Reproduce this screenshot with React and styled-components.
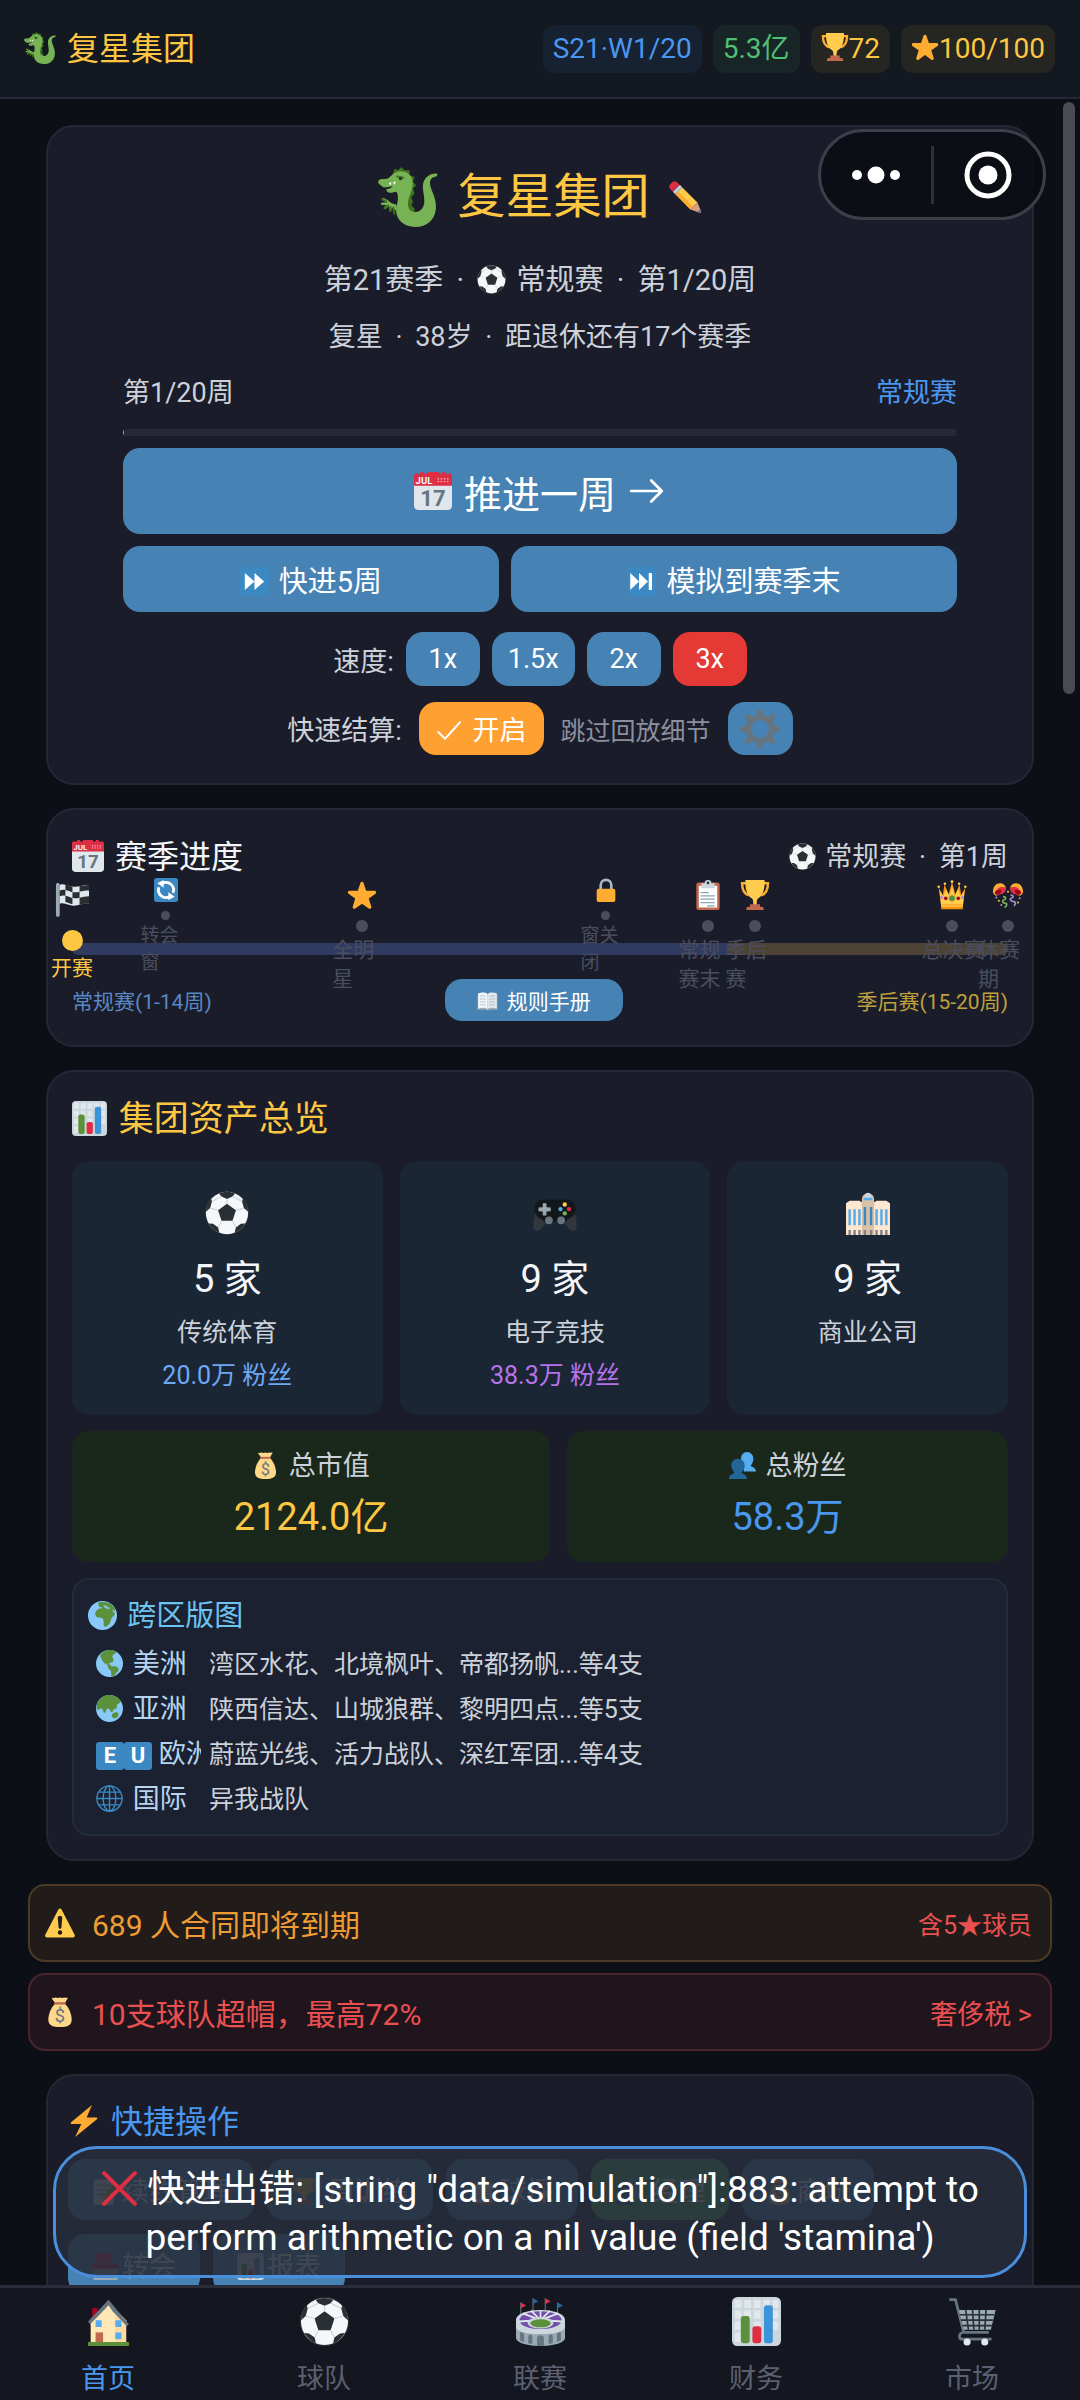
import React from "react";
import styled, { createGlobalStyle, css } from "styled-components";

const color = {
  page: "#0c0f16",
  bar: "#141821",
  card: "#1a1d29",
  line: "#232736",
  steel: "#4682b4",
  blue: "#4a97f0",
  gold: "#fdc743",
  text: "#f4f6fa",
  soft: "#ccd1da",
  muted: "#8b8f9e",
  faint: "#4a4d5e",
};

const GlobalStyle = createGlobalStyle`
  *, *::before, *::after { box-sizing: border-box; }
  body {
    margin: 0;
    background: ${color.page};
    color: ${color.text};
    font-family: Roboto, "Noto Sans CJK SC", sans-serif;
    font-weight: 400;
  }
  h1, h2, p, ul, ol { margin: 0; padding: 0; font-weight: 400; }
  ul, ol { list-style: none; }
  button { font: inherit; border: 0; margin: 0; cursor: pointer; }
  a { color: inherit; text-decoration: none; }
`;

/* ---------- icon drawings, all on a 36 unit grid ---------- */

const glyphs = {
  dragon: (
    <>
      <path fill="#3e721d" d="M9 4 10 1l2 1 2-2 2 2 3 0 0 3 3 1-1 3 2 2-2 2 1 3-2 2 1 3-1 2 2 2v2l3 0 3-2 1-3 0-4-1-3 0-4 1-4 3-3-2 10v10l-8 8-8-4-2-8 1-12z" />
      <path fill="#77b255" d="M35.6 4c-4-.6-8 2-8.600 6.500-.4 3 .8 6.500.8 10 0 4.500-3 6.500-5.800 6.500-2.500 0-4.200-1.800-4-5.500.3-4 3-7 2.800-12C20.600 5 17.500 2.600 13.500 2.600 10 2.600 8.500 5 6.500 6.500 5 7.700 3.500 7 1.500 7.400c-1.500.5-1.800 2-.7 3l2.400 1.800c2 .2 3.500-.4 5.500-.6-.5 1-2 1.500-3.700 1.800 0 1 .6 1.800 1.800 2 1.700.2 3-.6 4.200-.6 1.500 2 1 5.500.3 8-.8 3-.6 6.500 2 9.500 2.200 2.500 5.500 3.700 9.200 3.700 6.500 0 11.500-4 12.200-10.500C35.400 18.500 31.500 14 31.200 10c-.2-3 1.800-4.200 4.200-4.500z" />
      <path fill="#77b255" d="M11 22.500c-2 0-3.500-1-5-2.500L3 18.500c-.8.200-.6 1.200.2 1.500L5 21.200l-3 .3c-.7.5-.3 1.300.6 1.300h2.200L3.400 24.500c0 .8.900.9 1.500.4l1.600-1.300.3 2.600c.5.7 1.300.3 1.300-.5l.2-1.200 3.200 2z" />
      <path fill="none" stroke="#3e721d" strokeWidth="1.200" strokeLinecap="round" d="M2.500 19.300 5 20.800M4 24.800l2-1.700M7.300 26.500l.2-2.500M9.800 28l-.6-3.500M11.600 5.700l3.600.8" />
      <circle cx="13.500" cy="7" r="1" fill="#292f33" />
      <path fill="#fff" d="m6.500 9.500.8 1.700.8-1.900zM9 9l.8 1.800.9-2z" />
    </>
  ),
  pencil: (
    <>
      <path fill="#ffcc4d" d="M6.500 14 14 6.500l17 17-7.500 7.500z" />
      <path fill="#ffac33" d="m6.500 14 3-3 17 17-3 3z" />
      <path fill="#d99e82" d="m31 23.500 4 9.500c.3 1.200-.6 2-1.700 1.700L23.500 31z" />
      <path fill="#66757f" d="m34 30.700 1 2.300c.3 1.200-.6 2-1.700 1.700l-2.500-1z" />
      <path fill="#99aab5" d="M4 11.500 11.500 4l3 3L7 14.500z" />
      <path fill="#e1e8ed" d="m5 12.500 7.500-7.500 1 1L6 13.500z" />
      <path fill="#dd2e44" d="M4 11.500 1.500 9C-.5 7 0 5 2.300 2.500S7-.5 9 1.500L11.500 4z" />
    </>
  ),
  ball: (
    <>
      <circle cx="18" cy="18" r="18" fill="#292f33" />
      <circle cx="18" cy="18" r="17.300" fill="#f5f8fa" />
      <g fill="#292f33">
        <path d="m18 10.500 7.300 5.300-2.800 8.600h-9L10.700 15.800z" />
        <path d="M11.500 2.200C13.500 1.200 16 .7 18 .7s4.500.5 6.500 1.500L22.500 4.500 18 6.500l-4.500-2z" />
        <path d="m.8 17 3.400-3 1.500-5.500L5 6.200C2.200 9.300.7 13 .8 17zM35.200 17l-3.400-3-1.500-5.500.7-2.300c2.800 3.100 4.300 6.800 4.200 10.800z" />
        <path d="m3 26.500 3.600.3 4.200 3 .9 4.500C8 32.700 5 30 3 26.500zM33 26.500l-3.600.3-4.200 3-.9 4.500C28 32.700 31 30 33 26.500z" />
      </g>
      <path stroke="#ccd6dd" strokeWidth=".9" fill="none" d="M18 6.500v4M10.700 15.800l-6.500-1.800M25.300 15.800l6.500-1.800M13.500 24.400l-2.700 5.400M22.500 24.400l2.700 5.400M5.700 8.500 13.500 4.500M30.300 8.500l-7.800-4" />
    </>
  ),
  calendar: (
    <>
      <path fill="#e0e7ec" d="M36 32c0 2.200-1.800 4-4 4H4c-2.200 0-4-1.800-4-4V9c0-2.200 1.800-4 4-4h28c2.200 0 4 1.800 4 4z" />
      <path fill="#dd2e44" d="M0 13V4c0-2 1.500-3 3-3 0 1.500 3 1.500 3-1h3c0 2.500 3.500 2.500 3.500 0h11c0 2.500 3.500 2.500 3.500 0h3c0 2.500 3 2.500 3 1 1.500 0 3 1 3 3v9z" />
      <text x="1.500" y="11.500" fontSize="9" fontWeight="700" fontFamily="Roboto, sans-serif" fill="#f5f8fa">JUL</text>
      <text x="18" y="32" fontSize="21" fontWeight="700" textAnchor="middle" fontFamily="Roboto, sans-serif" fill="#66757f">17</text>
      <g fill="#f4abba">
        {[23, 26, 29, 32].map((x) => [6.5, 9].map((y) => <circle key={x + "-" + y} cx={x} cy={y} r=".8" />))}
      </g>
    </>
  ),
  star: (
    <path fill="#ffac33" d="M27.287 34.627c-.404 0-.806-.124-1.152-.371L18 28.422l-8.135 5.834a1.970 1.970 0 0 1-2.312-.008 1.971 1.971 0 0 1-.721-2.194l3.034-9.792-8.062-5.681a1.980 1.980 0 0 1-.708-2.203 1.978 1.978 0 0 1 1.866-1.363L12.947 13l3.179-9.549a1.976 1.976 0 0 1 3.749 0L23 13l10.036.015a1.975 1.975 0 0 1 1.159 3.566l-8.062 5.681 3.034 9.792a1.970 1.970 0 0 1-.720 2.194 1.957 1.957 0 0 1-1.160.379z" />
  ),
  trophy: (
    <>
      <path fill="none" stroke="#ffac33" strokeWidth="3" d="M9 4H2.500c0 8 2 12.500 8 14.500M27 4h6.500c0 8-2 12.500-8 14.500" />
      <path fill="#ffcc4d" d="M6.500 0h23c.5 9-1.500 19-7.500 22-1.500 1-2 3-2 8h-4c0-5-.5-7-2-8C8 19 6 9 6.500 0z" />
      <path fill="#c1694f" d="M12 29h12v3h2.500c1.500 0 2 1.500 2 4h-21c0-2.500.5-4 2-4H12z" />
    </>
  ),
  forward: (
    <>
      <rect width="36" height="36" rx="4" fill="#3b88c3" />
      <path fill="#fff" d="M6 7.500 18 18 6 28.500zM18 7.500 30 18 18 28.500z" />
    </>
  ),
  skip: (
    <>
      <rect width="36" height="36" rx="4" fill="#3b88c3" />
      <path fill="#fff" d="M4 7.500 15 18 4 28.500zM15 7.500 26 18 15 28.500zM27 7.500h4v21h-4z" />
    </>
  ),
  check: <path fill="none" stroke="currentColor" strokeWidth="2.600" strokeLinecap="round" d="M3 20l9 9L32 7" />,
  arrow: <path fill="none" stroke="currentColor" strokeWidth="2.600" strokeLinecap="round" strokeLinejoin="round" d="M3 18h28M22 8l10 10-10 10" />,
  gear: (
    <>
      <g fill="#66757f">
        {[0, 45, 90, 135, 180, 225, 270, 315].map((a) => (
          <path key={a} d="M14.500 8 16 .5C16.500-.2 19.500-.2 20 .5L21.500 8z" transform={`rotate(${a} 18 18)`} />
        ))}
      </g>
      <circle cx="18" cy="18" r="10.500" fill="none" stroke="#66757f" strokeWidth="5" />
    </>
  ),
  flag: (
    <>
      <path fill="#99aab5" d="M1 2c0-2.500 4-2.500 4 0v32c0 2.500-4 2.500-4 0z" />
      <path fill="#e1e8ed" d="M5 2c5-2 9 2 15 2s9-2 16-2v20c-6-1-10 2-16 2S10 20 5 22z" />
      <path fill="#292f33" d="M5 8c2-1 4-1 6-.5V1.700c3 .6 5 1.800 7.500 2.200v5.800c-2.500-.4-5-1.800-7.500-2.200v6c-2-.4-4-.3-6 .5zM18.500 9.700c3 .3 5 .1 7.500-.4V3.500c3-.6 6-1.500 10-1.500v6c-4-.2-7 .7-10 1.300v6.200c-3 .6-5 .7-7.500.4zM11 13.500c3 .6 5 1.700 7.500 2.400v6.300c-3-.4-5-1.600-7.500-2.200zM26 15.500c3-.7 6-1.500 10-1.500v8c-4-.3-7 .3-10 1z" />
    </>
  ),
  refresh: (
    <>
      <rect width="36" height="36" rx="4" fill="#3b88c3" />
      <path fill="none" stroke="#fff" strokeWidth="4.200" d="M12.500 8.200A11.200 11.200 0 0 1 28.500 22M23.500 27.800A11.200 11.200 0 0 1 7.500 14" />
      <path fill="#fff" d="M14.500 3v11.500L5 8zM21.500 33V21.500L31 28z" />
    </>
  ),
  lock: (
    <>
      <path fill="none" stroke="#aab8c2" strokeWidth="4" d="M10 18V11c0-11 16-11 16 0v7" />
      <rect x="4" y="16" width="28" height="20" rx="3" fill="#ffac33" />
    </>
  ),
  clipboard: (
    <>
      <rect x="4" y="3" width="28" height="33" rx="3" fill="#c1694f" />
      <path fill="#fff" d="M7 7h22v26H7z" />
      <path fill="#ccd6dd" d="M10 4h4a4 4 0 0 1 8 0h4v6H10z" />
      <circle cx="18" cy="3.500" r="1.600" fill="#292f33" />
      <path stroke="#88a4b8" strokeWidth="1.500" d="M9 15h10M9 19h17M9 23h17M9 27h17M17 31h9" />
    </>
  ),
  crown: (
    <>
      <path fill="#f4900c" d="m2 9 5 9 2-13 5 12 4-15 4 15 5-12 2 13 5-9-3 21v5H5v-5z" />
      <path fill="#ffcc4d" d="m3 13 5 7 2-9 5 8 3-12 3 12 5-8 2 9 5-7-2 19H5z" />
      <g fill="#ffcc4d">
        <circle cx="2" cy="8" r="1.500" /><circle cx="9.500" cy="4.500" r="1.500" /><circle cx="18" cy="2" r="1.700" /><circle cx="26.500" cy="4.500" r="1.500" /><circle cx="34" cy="8" r="1.500" />
      </g>
      <circle cx="18" cy="22" r="3.600" fill="#5c913b" />
      <g fill="#9d0522"><circle cx="10.500" cy="22" r="2.200" /><circle cx="25.500" cy="22" r="2.200" /></g>
      <g fill="#aa8dd8"><circle cx="5.500" cy="21" r="1.700" /><circle cx="30.500" cy="21" r="1.700" /></g>
      <path fill="#ffac33" d="M5 29h26v2H5z" />
    </>
  ),
  party: (
    <>
      <path fill="#ffac33" d="M0 15C-.5 8 4 3.500 9 4c5 .4 7 4 6 8-1 3-4 5-7 5-3 3-6.500 2-8-2zM36 15c.5-7-4-11.500-9-11-5 .4-7 4-6 8 1 3 4 5 7 5 3 3 6.500 2 8-2z" />
      <path fill="#dd2e44" d="M2 15c3-6 8-8 13-6 1.500 3-1 7-6 8-3 2-6 1-7-2zM34 15c-3-6-8-8-13-6-1.500 3 1 7 6 8 3 2 6 1 7-2z" />
      <path fill="#a0041e" d="M2 15c2-3 5-4 8-3 0 3-1 4-3 5.500-2 .5-4 0-5-2.500zM34 15c-2-3-5-4-8-3 0 3 1 4 3 5.500 2 .5 4 0 5-2.500z" />
      <path fill="none" stroke="#77b255" strokeWidth="2" d="M12 20c4 0 4 3 1 4s-1 4 2 4 1 4-1 5" />
      <path fill="none" stroke="#aa8dd8" strokeWidth="2" d="M21 18c4 0 4 3 1 4s0 4 3 4 2 4 0 5" />
      <g fill="#ffcc4d"><circle cx="7" cy="25" r="1.200" /><circle cx="30" cy="27" r="1.200" /><circle cx="18" cy="14" r="1.200" /></g>
      <g fill="#aa8dd8"><circle cx="4" cy="21" r="1.200" /><circle cx="32" cy="22" r="1.200" /><circle cx="10" cy="30" r="1.200" /></g>
    </>
  ),
  book: (
    <>
      <path fill="#99aab5" d="M1 6h34v26H20l-2 2-2-2H1z" />
      <path fill="#f5f8fa" d="M2 4c6-2 12-2 16 1v26c-4-3-10-3-16-1z" />
      <path fill="#e1e8ed" d="M34 4c-6-2-12-2-16 1v26c4-3 10-3 16-1z" />
      <path stroke="#aab8c2" strokeWidth="1.500" fill="none" d="M5 9c4-1 7-1 10 1M5 14c4-1 7-1 10 1M5 19c4-1 7-1 10 1M5 24c4-1 7-1 10 1M31 9c-4-1-7-1-10 1M31 14c-4-1-7-1-10 1M31 19c-4-1-7-1-10 1M31 24c-4-1-7-1-10 1" />
    </>
  ),
  chart: (
    <>
      <rect width="36" height="36" rx="4" fill="#ccd6dd" />
      <path fill="#e1e8ed" d="M2 2h5v6H2zM9 2h5v6H9zM16 2h5v6h-5zM23 2h5v6h-5zM30 2h4v6h-4zM2 10h5v6H2zM9 10h5v6H9zM16 10h5v6h-5zM30 10h4v6h-4zM2 18h5v6H2zM16 18h5v6h-5zM30 18h4v6h-4zM2 26h5v7H2z" />
      <rect x="6.500" y="14" width="6.500" height="20" rx="2" fill="#5c913b" />
      <rect x="15" y="21.500" width="6.500" height="12.500" rx="2" fill="#dd2e44" />
      <rect x="23.500" y="6" width="6.500" height="28" rx="2" fill="#3b94d9" />
    </>
  ),
  gamepad: (
    <>
      <path fill="#31373d" d="M2 17c-1.500 6-2.500 12-1 14.500S6 32 8 29l5-6zM34 17c1.500 6 2.500 12 1 14.500S30 32 28 29l-5-6z" />
      <path fill="#141719" d="M9.500 7h17c5 0 8.500 3.500 8.500 8s-3.500 7.500-6.500 8c-1.300 4-6.500 5-9 2h-3c-2.500 3-7.700 2-9-2C4.500 22.500 1 19.500 1 15s3.500-8 8.500-8z" />
      <path fill="#99aab5" d="M8 10h3v3.200l3.500.3v3l-3.500.3V20H8v-3.200l-3.500-.3v-3l3.500-.3z" />
      <circle cx="13" cy="24" r="3.200" fill="#66757f" /><circle cx="23" cy="24" r="3.200" fill="#66757f" />
      <circle cx="26" cy="11" r="1.800" fill="#ffcc4d" /><circle cx="29.500" cy="14.800" r="1.800" fill="#dd2e44" /><circle cx="26" cy="18.300" r="1.800" fill="#77b255" /><circle cx="22.500" cy="14.800" r="1.800" fill="#55acee" />
    </>
  ),
  tower: (
    <>
      <path fill="#ffe8cf" d="M0 10l3-2h8l3 2v26H0zM22 10l3-2h8l3 2v26H22z" />
      <path fill="#d9c0a6" d="M13 12V7c0-7 10-7 10 0v29H13z" />
      <path fill="#ccd6dd" d="M14.500 6c1-6 6-6 7 0z" />
      <path stroke="#55acee" strokeWidth="2" d="M3 15v13M7 15v13M11 15v13M25 15v13M29 15v13M33 15v13M14.500 6.500h7" />
      <path stroke="#3b88c3" strokeWidth="2" d="M15.500 13v15M20.500 13v15" />
      <path stroke="#808488" strokeWidth="2" d="M3 32v4M7 32v4M11 32v4M15.500 32v4M20.500 32v4M25 32v4M29 32v4M33 32v4" />
    </>
  ),
  money: (
    <>
      <path fill="#fdd888" d="M12 8c-5 5-8 13-8 19 0 7 5 9 14 9s14-2 14-9c0-6-3-14-8-19z" />
      <path fill="#fdd888" d="M9 1c2 1 3-1 5 0s3-1 5 0 4-1 5 0c3 0 4-1 3 1l-3 5H12L9 3C8 1.500 8 .5 9 1z" />
      <path fill="#bf6952" d="M11 6.500h14v2.600H11z" />
      <text x="18" y="30.500" fontSize="22" textAnchor="middle" fontFamily="Roboto, sans-serif" fill="#67757f">$</text>
    </>
  ),
  people: (
    <>
      <path fill="#55acee" d="M24 0c5 0 8.500 4 8.500 9 0 4-2 7.500-3.500 9 0 2 7 2 7 8H20L16 9c0-5 3-9 8-9z" />
      <path fill="#226699" d="M12 9c5 0 9 4 9 9 0 4-2.500 7.500-4 9 0 3 7 2 7 9H0c0-7 7-6 7-9-1.500-1.500-4-5-4-9 0-5 4-9 9-9z" />
    </>
  ),
  africa: (
    <>
      <circle cx="18" cy="18" r="18" fill="#88c9f9" />
      <path fill="#5c913b" d="M12 3c4-2.500 11-2 15.500.5 3 2 5.500 5 6.500 8.500-1.500 1-2.500-1-4-1 .5 3 3 3 3.500 5-1 3-4 3-4.500 6-1 3-2 7-5 9-2 1.500-4 1-4.500-1-.5-2.500.5-5-1-8-1.500-2-5.500-.5-8-2.500-2.500-3-1.500-7 1.500-9 2-1.500 4-1 5.500-1.500.5-1.500-3-1-4-2.500-.5-1.500 0-2.500-1.500-3.500z" />
      <path fill="#88c9f9" d="M19 6c2-1 4 0 5 1.500l3 .5c0 2-2 2-3.500 1.500C21.500 9 20 8 19 6z" />
    </>
  ),
  americas: (
    <>
      <circle cx="18" cy="18" r="18" fill="#88c9f9" />
      <path fill="#5c913b" d="M6 6C12-1 21-1 27 2c0 3-4 3-5 6s3 4 1 7-5 1-6 4c3 0 3 3 5 3 5-1 9 2 8 5s-3 2-4 5c-1 2-3 3-5 3-2-3 1-6-3-9-3-2-1-5-4-7-4-1-6-5-7-8-1-2-2-3-1-5z" />
    </>
  ),
  asia: (
    <>
      <circle cx="18" cy="18" r="18" fill="#88c9f9" />
      <path fill="#5c913b" d="M2 10C6 3 12 0 18 0c6 .5 12 3 15 8-1 4-5 3-5 6s-1 5-4 5c-2 1-1 4-3 4-3-1-2-5-5-5s-2 5-4 6c-3 0-2-6-5-6-2 0-3 2-5 2-2-3-1-7 0-10zM22 25c3-2 7-3 8 0 0 4-3 7-6 6s-4-4-2-6z" />
    </>
  ),
  globe: (
    <g fill="none" stroke="#3b88c3" strokeWidth="1.900">
      <circle cx="18" cy="18" r="16.800" />
      <ellipse cx="18" cy="18" rx="8.500" ry="16.800" />
      <path d="M18 1v34M1 18h34M4 9.500h28M4 26.500h28" />
    </g>
  ),
  warning: (
    <>
      <path fill="#ffcc4d" d="M2.700 35.500c-2.200 0-3.200-1.700-2.200-3.700L15.900 2c1.100-2 3-2 4.100 0l15.400 29.800c1 2 0 3.700-2.200 3.700z" />
      <path fill="#231f20" d="M15.300 12c0-3.500 5.400-3.500 5.400 0l-1 11.500c-.3 2-3.100 2-3.400 0z" />
      <circle cx="18" cy="29.500" r="2.700" fill="#231f20" />
    </>
  ),
  bolt: <path fill="#ffac33" d="M27 0 3.500 19.500c-1 1-.6 2 .5 2h11L8 36 32.500 16c1-1 .6-2-.5-2H21z" />,
  cross: <path fill="none" stroke="#dd2e44" strokeWidth="4" strokeLinecap="round" d="m3 3 30 30M33 3 3 33" />,
  house: (
    <>
      <path fill="#a0041e" d="M6 8h4v9H6z" />
      <path fill="#ffe8b6" d="M5 17 18 4l13 13v17H5z" />
      <path fill="#ffcc8d" d="M23 11l8 7v16h-8z" opacity=".45" />
      <path fill="#66757f" d="M18 2 3 18l1.500 2L14 10.500 18 6l3 4.500 10.500 11L33 20z" />
      <path fill="#ffe8b6" d="M5 20 14.500 10 23 20v14H5z" />
      <path fill="#55acee" d="M8.500 17h4.500v5H8.500zM23 17h4.500v5H23zM23 26h4.500v5H23z" />
      <path fill="#c1694f" d="M8.500 26H14v8H8.500z" />
      <path fill="#5c913b" d="M3 33h30v3H3z" />
    </>
  ),
  stadium: (
    <>
      <path stroke="#66757f" strokeWidth=".8" d="M3.500 4v10M12.500 1v10M21.500 1v10M30.500 4v10" />
      <path fill="#dd2e44" d="m3.500 4 4 2.200-4 2.200zM21.500 1l4 2.200-4 2.200z" />
      <path fill="#226699" d="m12.500 1 4 2.200-4 2.200zM30.500 4l4 2.200-4 2.200z" />
      <path fill="#99aab5" d="M0 18v12c0 8 36 8 36 0V18z" />
      <path fill="#ccd6dd" d="M0 17c0-10 36-10 36 0v5c0 7-36 7-36 0z" />
      <ellipse cx="18" cy="17" rx="15.500" ry="6.500" fill="#744eaa" />
      <path stroke="#e1e8ed" strokeWidth="1.300" d="M18 17 5 12M18 17 11 10M18 17V10M18 17l7-7M18 17l13-5M18 17 2 18M18 17l16 1" />
      <ellipse cx="18" cy="19" rx="9.500" ry="4.200" fill="#ccd6dd" />
      <ellipse cx="18" cy="19.300" rx="7.500" ry="3" fill="#5c913b" />
      <path fill="#66757f" d="M3 27c0-2 3-1 3 1v5l-3-1zM9 29c0-2 3-2 3 0v5.500L9 34zM15.500 30c0-2.500 5-2.500 5 0v6h-5zM24 29c0-2 3-2 3 0v5l-3 .5zM30 28c0-2 3-3 3-1v5l-3 1z" />
    </>
  ),
  cart: (
    <>
      <path fill="none" stroke="#66757f" strokeWidth="2" d="M1 2h4.500l6 24H30M10.500 26c-3 1.500-2.500 5 0 5H32" />
      <path fill="#99aab5" d="M8 9.500h27L31.500 24h-20z" />
      <path stroke="#292f33" strokeWidth="1.200" d="M8.500 13H34M9.500 17H33M10.500 21h22M13 9.500l2 14.500M18 9.500l1 14.500M23 9.500V24M28 9.500 27 24" />
      <circle cx="14" cy="33" r="2.600" fill="#e1e8ed" /><circle cx="27" cy="33" r="2.600" fill="#e1e8ed" />
    </>
  ),
  memo: (
    <>
      <rect x="2" y="2" width="27" height="34" rx="3" fill="#e1e8ed" />
      <path stroke="#99aab5" strokeWidth="2" d="M6 10h19M6 16h19M6 22h14" />
      <path stroke="#f4900c" strokeWidth="5" d="M34 6 16 28" />
    </>
  ),
  store: (
    <>
      <path fill="#99aab5" d="M2 18h32v18H2z" />
      <path fill="#be1931" d="M0 15h36v6H0z" />
      <rect x="5" width="20" height="14" fill="#dd2e44" />
    </>
  ),
};

const IconSvg = styled.svg`
  display: inline-block;
  flex: none;
  width: 1em;
  height: 1em;
  margin-right: ${(p) => (p.$lead ? "3px" : "0")};
  vertical-align: -0.14em;
  overflow: visible;
`;

const Icon = ({ name, lead }) => (
  <IconSvg viewBox="0 0 36 36" aria-hidden="true" $lead={lead}>
    {glyphs[name]}
  </IconSvg>
);

/* ---------- shell ---------- */

const Shell = styled.div`
  position: relative;
  display: flex;
  flex-direction: column;
  height: 100vh;
  min-height: 640px;
  overflow: hidden;
`;

const Header = styled.header`
  display: flex;
  flex: none;
  align-items: center;
  justify-content: space-between;
  height: 99px;
  padding: 0 25px 0 24px;
  background: ${color.bar};
  border-bottom: 2px solid #242736;
`;

const Brand = styled.p`
  font-size: 32px;
  line-height: 48px;
  color: ${color.gold};
`;

const Chips = styled.ul`
  display: flex;
  gap: 11px;
`;

const chipTones = {
  blue: ["#162131", color.blue],
  green: ["#182526", "#4fbf72"],
  gold: ["#252521", color.gold],
};

const Chip = styled.li`
  padding: 0 10px;
  border-radius: 12px;
  font-size: 28px;
  line-height: 48px;
  white-space: nowrap;
  background: ${(p) => chipTones[p.$tone][0]};
  color: ${(p) => chipTones[p.$tone][1]};
`;

const Main = styled.main`
  display: flex;
  flex: 1;
  flex-direction: column;
  gap: 23px;
  min-height: 0;
  padding: 26px 28px 0;
  overflow-y: auto;
  scrollbar-width: none;
  > * { flex: none; }
`;

const ScrollThumb = styled.div`
  position: absolute;
  top: 102px;
  right: 5px;
  width: 12px;
  height: 592px;
  border-radius: 6px;
  background: #494b50;
`;

const Capsule = styled.div`
  position: absolute;
  top: 129px;
  right: 34px;
  display: flex;
  align-items: center;
  width: 228px;
  height: 91px;
  border: 3px solid #3c3e48;
  border-radius: 46px;
  background: rgba(10, 13, 19, 0.92);
`;

const CapsuleButton = styled.button`
  display: flex;
  flex: 1;
  align-items: center;
  justify-content: center;
  height: 58px;
  padding: 0;
  background: none;
  & + & { border-left: 3px solid #2e313b; }
`;

/* ---------- shared pieces ---------- */

const Card = styled.section`
  display: flex;
  flex-direction: column;
  margin: 0 18px;
  border: 2px solid ${color.line};
  border-radius: 28px;
  background: ${color.card};
  padding: ${(p) => p.$pad};
`;

const Between = styled.div`
  display: flex;
  align-items: center;
  justify-content: space-between;
`;

const Dot = styled.span`
  margin: 0 6px;
  &::before { content: "·"; }
`;

const Button = styled.button`
  padding: 0 18px;
  border-radius: 17px;
  background: ${color.steel};
  color: #fff;
  white-space: nowrap;
`;

/* ---------- hero card ---------- */

const TitleRow = styled.div`
  display: flex;
  align-items: center;
  justify-content: center;
  gap: 19px;
  height: 64px;
`;

const DragonMark = styled.span`
  display: flex;
  font-size: 60px;
`;

const Title = styled.h1`
  font-size: 48px;
  line-height: 64px;
  color: ${color.gold};
`;

const EditButton = styled.button`
  display: flex;
  padding: 0;
  font-size: 33px;
  background: none;
`;

const SeasonLine = styled.p`
  margin-top: 31px;
  font-size: 29px;
  line-height: 40px;
  text-align: center;
  color: ${color.soft};
`;

const OwnerLine = styled(SeasonLine)`
  margin-top: 19px;
  font-size: 27px;
  line-height: 36px;
`;

const WeekRow = styled(Between)`
  margin-top: 20px;
  font-size: 27px;
  line-height: 36px;
  color: ${color.soft};
`;

const Phase = styled.span`
  color: ${color.blue};
`;

const Progress = styled.div`
  height: 7px;
  margin: 18px 0 12px;
  border-radius: 4px;
  background: #262937;
  overflow: hidden;
`;

const ProgressFill = styled.div`
  height: 100%;
  background: #9aa0ae;
`;

const AdvanceButton = styled(Button)`
  display: flex;
  align-items: center;
  justify-content: center;
  gap: 12px;
  height: 86px;
  font-size: 38px;
`;

const SkipRow = styled.div`
  display: flex;
  gap: 12px;
  margin: 12px 0 20px;
`;

const SkipButton = styled(Button)`
  flex: 1 1 auto;
  height: 66px;
  font-size: 29px;
`;

const ControlRow = styled.div`
  display: flex;
  align-items: center;
  justify-content: center;
  gap: ${(p) => p.$gap}px;
  font-size: 27px;
  color: ${color.soft};
  & + & { margin-top: 16px; }
`;

const SpeedButton = styled(Button)`
  min-width: 74px;
  height: 54px;
  padding: 0 16px;
  background: ${(p) => (p.$active ? "#e53935" : color.steel)};
`;

const ToggleButton = styled(Button)`
  height: 53px;
  padding: 0 17px;
  background: #ffa033;
`;

const Hint = styled.span`
  font-size: 25px;
  color: ${color.muted};
`;

const GearButton = styled(Button)`
  display: flex;
  align-items: center;
  justify-content: center;
  width: 65px;
  height: 53px;
  padding: 0;
  font-size: 40px;
`;

/* ---------- season timeline ---------- */

const SeasonTitle = styled.h2`
  font-size: 32px;
  line-height: 36px;
`;

const SeasonNow = styled.span`
  font-size: 27px;
  line-height: 36px;
  color: ${color.soft};
`;

const Timeline = styled.ol`
  position: relative;
  height: 104px;
`;

const Track = styled.li`
  display: flex;
  position: absolute;
  top: 68px;
  left: 0;
  right: 0;
  height: 12px;
  border-radius: 6px;
  overflow: hidden;
  background: linear-gradient(90deg, #2f3b60 70%, #4c4335 70%);
`;

const sizes = {
  small: css`
    top: 3px; width: 50px;
    --icon: 24px; --dot: 9px; --gap: 9px; --label-gap: 2px;
    font-size: 19px; line-height: 27px;
  `,
  large: css`
    top: 5px; width: 60px;
    --icon: 30px; --dot: 12px; --gap: 10px; --label-gap: 4px;
    font-size: 21px; line-height: 29px;
  `,
  current: css`
    top: 8px; width: 60px;
    --icon: 34px; --dot: 21px; --gap: 13px; --label-gap: 4px;
    font-size: 21px; line-height: 26px;
  `,
};

const Milestone = styled.li`
  position: absolute;
  display: flex;
  flex-direction: column;
  align-items: center;
  transform: translateX(-50%);
  color: ${(p) => (p.$size === "current" ? color.gold : color.faint)};
  ${(p) => sizes[p.$size]}
  svg { font-size: var(--icon); }
  &::before {
    content: "";
    order: 1;
    width: var(--dot);
    height: var(--dot);
    margin: var(--gap) 0 var(--label-gap);
    border-radius: 50%;
    background: currentColor;
  }
`;

const MilestoneLabel = styled.span`
  order: 2;
  width: ${(p) => (p.$center ? "auto" : "100%")};
  white-space: ${(p) => (p.$oneLine ? "nowrap" : "normal")};
`;

const LegendRow = styled(Between)`
  font-size: 21px;
`;

const Legend = styled.span`
  color: ${(p) => (p.$playoff ? "#bfa03c" : "#5a87c6")};
`;

const RulesButton = styled(Button)`
  position: relative;
  height: 42px;
  padding: 0 32px;
`;

/* ---------- assets ---------- */

const AssetsTitle = styled.h2`
  margin-bottom: 19px;
  font-size: 35px;
  line-height: 44px;
  color: ${color.gold};
`;

const TileRow = styled.div`
  display: flex;
  gap: 17px;
  margin-bottom: 16px;
`;

const Tile = styled.div`
  display: flex;
  flex: 1 1 auto;
  flex-direction: column;
  align-items: center;
  padding: 30px 14px 22px;
  border-radius: 17px;
  background: #1b2635;
`;

const TileIcon = styled.span`
  display: flex;
  font-size: 44px;
`;

const BigValue = styled.span`
  font-size: 38px;
  line-height: 50px;
  color: ${(p) => p.$color || color.text};
`;

const TileValue = styled(BigValue)`
  margin: 19px 0 12px;
`;

const TileLabel = styled.span`
  font-size: 25px;
  line-height: 34px;
  color: ${(p) => p.$color || color.soft};
  & + & { margin-top: 9px; }
`;

const TotalTile = styled(Tile)`
  gap: 8px;
  padding: 17px 14px 20px;
  background: #1a281b;
`;

const TotalLabel = styled.span`
  font-size: 27px;
  line-height: 36px;
  color: ${color.soft};
`;

const RegionBox = styled.div`
  padding: 18px 14px 12px;
  border: 2px solid #242c3b;
  border-radius: 17px;
  background: #1b2130;
`;

const RegionTitle = styled.h2`
  margin-bottom: 8px;
  font-size: 29px;
  line-height: 36px;
  color: #6cc4f0;
`;

const RegionRow = styled.li`
  display: flex;
  align-items: center;
  gap: 8px;
  padding-left: 8px;
  line-height: 45px;
`;

const RegionName = styled.span`
  width: 105px;
  overflow: hidden;
  white-space: nowrap;
  font-size: 27px;
  color: #b5d5f0;
`;

const RegionTeams = styled.span`
  font-size: 25px;
  color: ${color.soft};
`;

const LetterTile = styled.span`
  display: inline-block;
  width: 28px;
  height: 28px;
  border-radius: 3px;
  font-size: 22px;
  font-weight: 700;
  line-height: 28px;
  text-align: center;
  color: #fff;
  background: #3b88c3;
`;

/* ---------- alerts ---------- */

const Alerts = styled.div`
  display: flex;
  flex-direction: column;
  gap: 11px;
`;

const alertTones = {
  amber: ["#211c1a", "#4b3a26", "#f09c35"],
  red: ["#20151c", "#4b232c", "#ea5050"],
};

const Alert = styled.a`
  display: flex;
  align-items: center;
  gap: 17px;
  height: 78px;
  padding: 0 18px 0 15px;
  border: 2px solid ${(p) => alertTones[p.$tone][1]};
  border-radius: 17px;
  background: ${(p) => alertTones[p.$tone][0]};
  color: ${(p) => alertTones[p.$tone][2]};
  font-size: 30px;
`;

const AlertNote = styled.span`
  margin-left: auto;
  font-size: ${(p) => (p.$small ? 25 : 27)}px;
  color: #ea5050;
`;

/* ---------- quick actions ---------- */

const ActionsTitle = styled.h2`
  margin-bottom: 17px;
  font-size: 32px;
  line-height: 40px;
  color: ${color.blue};
`;

const ActionList = styled.div`
  display: flex;
  flex-wrap: wrap;
  gap: 14px 13px;
`;

const ActionButton = styled(Button)`
  height: 61px;
  padding: 0 24px;
  font-size: 27px;
  background: ${(p) => (p.$green ? "#4caf50" : color.steel)};
`;

const Toast = styled.div`
  position: absolute;
  left: 53px;
  right: 53px;
  bottom: 122px;
  padding: 17px 36px 13px;
  border: 3px solid #4a8fdc;
  border-radius: 44px;
  font-size: 37px;
  line-height: 48px;
  text-align: center;
  color: #fff;
  background: rgba(39, 44, 58, 0.88);
`;

const Nav = styled.nav`
  position: relative;
  display: grid;
  flex: none;
  grid-template-columns: repeat(5, 1fr);
  height: 115px;
  padding-top: 9px;
  border-top: 3px solid #2b2c3a;
  background: #141720;
`;

const NavItem = styled.a`
  display: flex;
  flex-direction: column;
  align-items: center;
  gap: 15px;
  font-size: 27px;
  line-height: 36px;
  color: ${(p) => (p.$active ? color.blue : "#5d6070")};
  svg { font-size: 49px; }
`;

/* ---------- data ---------- */

const milestones = [
  { at: 0, icon: "flag", label: "开赛", size: "current" },
  { at: 10, icon: "refresh", label: "转会窗", size: "small" },
  { at: 31, icon: "star", label: "全明星", size: "large" },
  { at: 57, icon: "lock", label: "窗关闭", size: "small" },
  { at: 68, icon: "clipboard", label: "常规赛末", size: "large" },
  { at: 73, icon: "trophy", label: "季后赛", size: "large" },
  { at: 94, icon: "crown", label: "总决赛", size: "large", oneLine: true },
  { at: 100, icon: "party", label: "休赛期", size: "large" },
];

const assets = [
  { icon: "ball", value: "5 家", label: "传统体育", fans: "20.0万 粉丝", fansColor: "#6da7f5" },
  { icon: "gamepad", value: "9 家", label: "电子竞技", fans: "38.3万 粉丝", fansColor: "#b673ea" },
  { icon: "tower", value: "9 家", label: "商业公司" },
];

const regions = [
  { icon: <Icon name="americas" lead />, name: "美洲", teams: "湾区水花、北境枫叶、帝都扬帆...等4支" },
  { icon: <Icon name="asia" lead />, name: "亚洲", teams: "陕西信达、山城狼群、黎明四点...等5支" },
  { icon: <><LetterTile>E</LetterTile><LetterTile>U</LetterTile></>, name: "欧洲", teams: "蔚蓝光线、活力战队、深红军团...等4支" },
  { icon: <Icon name="globe" lead />, name: "国际", teams: "异我战队" },
];

const actions = [
  { icon: "memo", label: "续约管理" },
  { icon: "trophy", label: " 周训练" },
  { icon: "clipboard", label: "球探" },
  { icon: "people", label: " 经理", green: true },
  { icon: "money", label: "商城" },
  { icon: "store", label: "转会" },
  { icon: "chart", label: "报表" },
];

const tabs = [
  { icon: "house", label: "首页" },
  { icon: "ball", label: "球队" },
  { icon: "stadium", label: "联赛" },
  { icon: "chart", label: "财务" },
  { icon: "cart", label: "市场" },
];

const speeds = ["1x", "1.5x", "2x", "3x"];

export default function App() {
  const [speed, setSpeed] = React.useState("3x");
  const seasonProgress = 0.1;

  return (
    <>
      <GlobalStyle />
      <Shell>
        <Header>
          <Brand><Icon name="dragon" lead /> 复星集团</Brand>
          <Chips>
            <Chip $tone="blue">S21·W1/20</Chip>
            <Chip $tone="green">5.3亿</Chip>
            <Chip $tone="gold"><Icon name="trophy" />72</Chip>
            <Chip $tone="gold"><Icon name="star" />100/100</Chip>
          </Chips>
        </Header>

        <Main>
          <Card $pad="38px 75px 28px">
            <TitleRow>
              <DragonMark><Icon name="dragon" /></DragonMark>
              <Title>复星集团</Title>
              <EditButton aria-label="编辑"><Icon name="pencil" /></EditButton>
            </TitleRow>
            <SeasonLine>第21赛季 <Dot /> <Icon name="ball" lead /> 常规赛 <Dot /> 第1/20周</SeasonLine>
            <OwnerLine>复星 <Dot /> 38岁 <Dot /> 距退休还有17个赛季</OwnerLine>
            <WeekRow><span>第1/20周</span><Phase>常规赛</Phase></WeekRow>
            <Progress><ProgressFill style={{ width: `${seasonProgress}%` }} /></Progress>
            <AdvanceButton><Icon name="calendar" /> 推进一周 <Icon name="arrow" /></AdvanceButton>
            <SkipRow>
              <SkipButton><Icon name="forward" lead /> 快进5周</SkipButton>
              <SkipButton><Icon name="skip" lead /> 模拟到赛季末</SkipButton>
            </SkipRow>
            <ControlRow $gap={12}>
              <span>速度:</span>
              {speeds.map((s) => (
                <SpeedButton key={s} $active={s === speed} onClick={() => setSpeed(s)}>{s}</SpeedButton>
              ))}
            </ControlRow>
            <ControlRow $gap={17}>
              <span>快速结算:</span>
              <ToggleButton><Icon name="check" lead /> 开启</ToggleButton>
              <Hint>跳过回放细节</Hint>
              <GearButton aria-label="设置"><Icon name="gear" /></GearButton>
            </ControlRow>
          </Card>

          <Card $pad="29px 24px 24px">
            <Between>
              <SeasonTitle><Icon name="calendar" lead /> 赛季进度</SeasonTitle>
              <SeasonNow><Icon name="ball" lead /> 常规赛 <Dot /> 第1周</SeasonNow>
            </Between>
            <Timeline>
              <Track aria-hidden="true" />
              {milestones.map((m) => (
                <Milestone key={m.label} $size={m.size} style={{ left: `${m.at}%` }}>
                  <Icon name={m.icon} />
                  <MilestoneLabel $center={m.size === "current"} $oneLine={m.oneLine}>{m.label}</MilestoneLabel>
                </Milestone>
              ))}
            </Timeline>
            <LegendRow>
              <Legend>常规赛(1-14周)</Legend>
              <RulesButton><Icon name="book" lead /> 规则手册</RulesButton>
              <Legend $playoff>季后赛(15-20周)</Legend>
            </LegendRow>
          </Card>

          <Card $pad="26px 24px 23px">
            <AssetsTitle><Icon name="chart" lead /> 集团资产总览</AssetsTitle>
            <TileRow>
              {assets.map((a) => (
                <Tile key={a.label}>
                  <TileIcon><Icon name={a.icon} /></TileIcon>
                  <TileValue>{a.value}</TileValue>
                  <TileLabel>{a.label}</TileLabel>
                  {a.fans && <TileLabel $color={a.fansColor}>{a.fans}</TileLabel>}
                </Tile>
              ))}
            </TileRow>
            <TileRow>
              <TotalTile>
                <TotalLabel><Icon name="money" lead /> 总市值</TotalLabel>
                <BigValue $color={color.gold}>2124.0亿</BigValue>
              </TotalTile>
              <TotalTile>
                <TotalLabel><Icon name="people" lead /> 总粉丝</TotalLabel>
                <BigValue $color={color.blue}>58.3万</BigValue>
              </TotalTile>
            </TileRow>
            <RegionBox>
              <RegionTitle><Icon name="africa" lead /> 跨区版图</RegionTitle>
              <ul>
                {regions.map((r) => (
                  <RegionRow key={r.name}>
                    <RegionName>{r.icon} {r.name}</RegionName>
                    <RegionTeams>{r.teams}</RegionTeams>
                  </RegionRow>
                ))}
              </ul>
            </RegionBox>
          </Card>

          <Alerts>
            <Alert href="#contracts" $tone="amber">
              <Icon name="warning" />
              <span>689 人合同即将到期</span>
              <AlertNote $small>含5★球员</AlertNote>
            </Alert>
            <Alert href="#tax" $tone="red">
              <Icon name="money" />
              <span>10支球队超帽，最高72%</span>
              <AlertNote>奢侈税 &gt;</AlertNote>
            </Alert>
          </Alerts>

          <Card $pad="26px 20px 28px">
            <ActionsTitle><Icon name="bolt" lead /> 快捷操作</ActionsTitle>
            <ActionList>
              {actions.map((a) => (
                <ActionButton key={a.label} $green={a.green}><Icon name={a.icon} lead />{a.label}</ActionButton>
              ))}
            </ActionList>
          </Card>
        </Main>

        <ScrollThumb />
        <Capsule>
          <CapsuleButton aria-label="更多">
            <svg width="48" height="20" viewBox="0 0 48 20" fill="#fff">
              <circle cx="5" cy="10" r="5" /><circle cx="24" cy="10" r="8.500" /><circle cx="43" cy="10" r="5" />
            </svg>
          </CapsuleButton>
          <CapsuleButton aria-label="关闭">
            <svg width="48" height="48" viewBox="0 0 48 48">
              <circle cx="24" cy="24" r="21" fill="none" stroke="#fff" strokeWidth="5" />
              <circle cx="24" cy="24" r="9.500" fill="#fff" />
            </svg>
          </CapsuleButton>
        </Capsule>

        <Toast role="alert">
          <Icon name="cross" /> 快进出错: [string "data/simulation"]:883: attempt to perform arithmetic on a nil value (field 'stamina')
        </Toast>

        <Nav>
          {tabs.map((t, i) => (
            <NavItem key={t.label} href={"#" + t.icon} $active={i === 0}>
              <Icon name={t.icon} />
              {t.label}
            </NavItem>
          ))}
        </Nav>
      </Shell>
    </>
  );
}
